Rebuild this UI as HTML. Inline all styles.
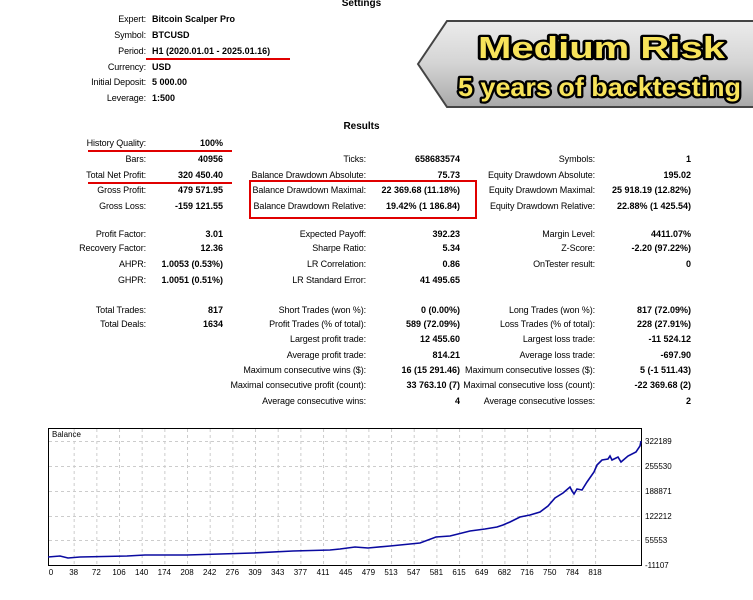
<!DOCTYPE html>
<html><head><meta charset="utf-8"><style>
body{margin:0;width:753px;height:600px;background:#fff;position:relative;overflow:hidden;font-family:"Liberation Sans",sans-serif;font-size:9px;color:#000}
.l,.v,.s{position:absolute;white-space:nowrap;line-height:12px}
.l{text-align:right;letter-spacing:-0.1px}
.v{text-align:right;font-weight:bold}
.s{font-weight:bold}
.h{position:absolute;font-weight:bold;font-size:10px;width:753px;text-align:center}
.red{position:absolute;background:#e00000}
</style></head><body>
<div class="h" style="top:-2px;left:-15px">Settings</div>
<div class="h" style="top:121px;left:-15px">Results</div>

<div id="set"></div>
<div class="red" style="left:146px;top:58px;width:144px;height:2px"></div>
<div class="red" style="left:88px;top:150px;width:144px;height:2px"></div>
<div class="red" style="left:88px;top:182px;width:144px;height:2px"></div>
<div style="position:absolute;left:249px;top:180px;width:224px;height:35px;border:2px solid #e00000"></div>

<svg style="position:absolute;left:0;top:0" width="753" height="600">
<defs><linearGradient id="g" x1="0" y1="0" x2="0" y2="1"><stop offset="0" stop-color="#ececec"/><stop offset="0.5" stop-color="#d4d4d4"/><stop offset="1" stop-color="#a8a8a8"/></linearGradient></defs>
<polygon points="418,64 447,21 760,21 760,107 447,107" fill="url(#g)" stroke="#444" stroke-width="2"/>
<g font-family="Liberation Sans,sans-serif" font-weight="bold" stroke="#000" stroke-width="4.5" paint-order="stroke" fill="#f7e35a" stroke-linejoin="round">
<text x="478" y="58" font-size="31" textLength="247" lengthAdjust="spacingAndGlyphs">Medium Risk</text>
<text x="458" y="96" font-size="26" textLength="283" lengthAdjust="spacingAndGlyphs">5 years of backtesting</text>
</g>
<rect x="48.5" y="428.5" width="593" height="137" fill="#fff" stroke="#000" stroke-width="1"/>
<g stroke="#ccc" stroke-dasharray="3,3" stroke-width="1">
<line x1="49" y1="441.5" x2="641" y2="441.5"/><line x1="49" y1="466.5" x2="641" y2="466.5"/><line x1="49" y1="491.5" x2="641" y2="491.5"/><line x1="49" y1="516.5" x2="641" y2="516.5"/><line x1="49" y1="540.5" x2="641" y2="540.5"/>
<g id="vg"></g>
</g>
<text x="52" y="437" font-size="8" font-family="Liberation Sans,sans-serif">Balance</text>
<polyline fill="none" stroke="#0a0aa0" stroke-width="1.6" points="48,557 60,556 68,558 80,557 127,556 145,555 187,555 253,553 293,551 330,550 340,549 355,547 368,548 390,546 420,543 436,537 450,536 470,531 485,529 497,527 503,525 510,522 520,517 530,515 540,512 548,506 555,498 563,493 570,487 572,491 574,494 577,489 582,490 587,482 594,472 597,465 602,460 608,459 610,456 612,460 618,457 621,462 628,456 636,452 640,446 641,441"/>
<g font-size="8" font-family="Liberation Sans,sans-serif">
<text x="645" y="444">322189</text><text x="645" y="469">255530</text><text x="645" y="494">188871</text><text x="645" y="519">122212</text><text x="645" y="543">55553</text><text x="645" y="568">-11107</text>
</g>
<g id="xl" font-size="8" font-family="Liberation Sans,sans-serif" text-anchor="middle"></g>
</svg>
<script>
var r=[
[146,152,19,"Expert:","Bitcoin Scalper Pro",1],[146,152,35,"Symbol:","BTCUSD",1],[146,152,51,"Period:","H1 (2020.01.01 - 2025.01.16)",1],[146,152,67,"Currency:","USD",1],[146,152,82,"Initial Deposit:","5 000.00",1],[146,152,98,"Leverage:","1:500",1],
[146,223,143,"History Quality:","100%"],[146,223,159,"Bars:","40956"],[146,223,175,"Total Net Profit:","320 450.40"],[146,223,190,"Gross Profit:","479 571.95"],[146,223,206,"Gross Loss:","-159 121.55"],
[146,223,234,"Profit Factor:","3.01"],[146,223,248,"Recovery Factor:","12.36"],[146,223,264,"AHPR:","1.0053 (0.53%)"],[146,223,280,"GHPR:","1.0051 (0.51%)"],
[146,223,310,"Total Trades:","817"],[146,223,324,"Total Deals:","1634"],
[366,460,159,"Ticks:","658683574"],[366,460,175,"Balance Drawdown Absolute:","75.73"],[366,460,190,"Balance Drawdown Maximal:","22 369.68 (11.18%)"],[366,460,206,"Balance Drawdown Relative:","19.42% (1 186.84)"],
[366,460,234,"Expected Payoff:","392.23"],[366,460,248,"Sharpe Ratio:","5.34"],[366,460,264,"LR Correlation:","0.86"],[366,460,280,"LR Standard Error:","41 495.65"],
[366,460,310,"Short Trades (won %):","0 (0.00%)"],[366,460,324,"Profit Trades (% of total):","589 (72.09%)"],[366,460,339,"Largest profit trade:","12 455.60"],[366,460,355,"Average profit trade:","814.21"],[366,460,370,"Maximum consecutive wins ($):","16 (15 291.46)"],[366,460,385,"Maximal consecutive profit (count):","33 763.10 (7)"],[366,460,401,"Average consecutive wins:","4"],
[595,691,159,"Symbols:","1"],[595,691,175,"Equity Drawdown Absolute:","195.02"],[595,691,190,"Equity Drawdown Maximal:","25 918.19 (12.82%)"],[595,691,206,"Equity Drawdown Relative:","22.88% (1 425.54)"],
[595,691,234,"Margin Level:","4411.07%"],[595,691,248,"Z-Score:","-2.20 (97.22%)"],[595,691,264,"OnTester result:","0"],
[595,691,310,"Long Trades (won %):","817 (72.09%)"],[595,691,324,"Loss Trades (% of total):","228 (27.91%)"],[595,691,339,"Largest loss trade:","-11 524.12"],[595,691,355,"Average loss trade:","-697.90"],[595,691,370,"Maximum consecutive losses ($):","5 (-1 511.43)"],[595,691,385,"Maximal consecutive loss (count):","-22 369.68 (2)"],[595,691,401,"Average consecutive losses:","2"]];
var h="";r.forEach(function(a){var t=a[2]-6;h+='<div class="l" style="left:'+(a[0]-250)+'px;width:250px;top:'+t+'px">'+a[3]+'</div>';
if(a[5])h+='<div class="s" style="left:'+a[1]+'px;top:'+t+'px">'+a[4]+'</div>';else h+='<div class="v" style="left:'+(a[1]-200)+'px;width:200px;top:'+t+'px">'+a[4]+'</div>';});
document.getElementById('set').innerHTML=h;
var xs=[0,38,72,106,140,174,208,242,276,309,343,377,411,445,479,513,547,581,615,649,682,716,750,784,818],g="",v="";
xs.forEach(function(n,i){var x=51+i*22.67;g+='<text x="'+x+'" y="575">'+n+'</text>';if(i>0)v+='<line x1="'+(x+0.5)+'" y1="429" x2="'+(x+0.5)+'" y2="565"/>';});
document.getElementById('xl').innerHTML=g;document.getElementById('vg').innerHTML=v;
</script>
</body></html>
